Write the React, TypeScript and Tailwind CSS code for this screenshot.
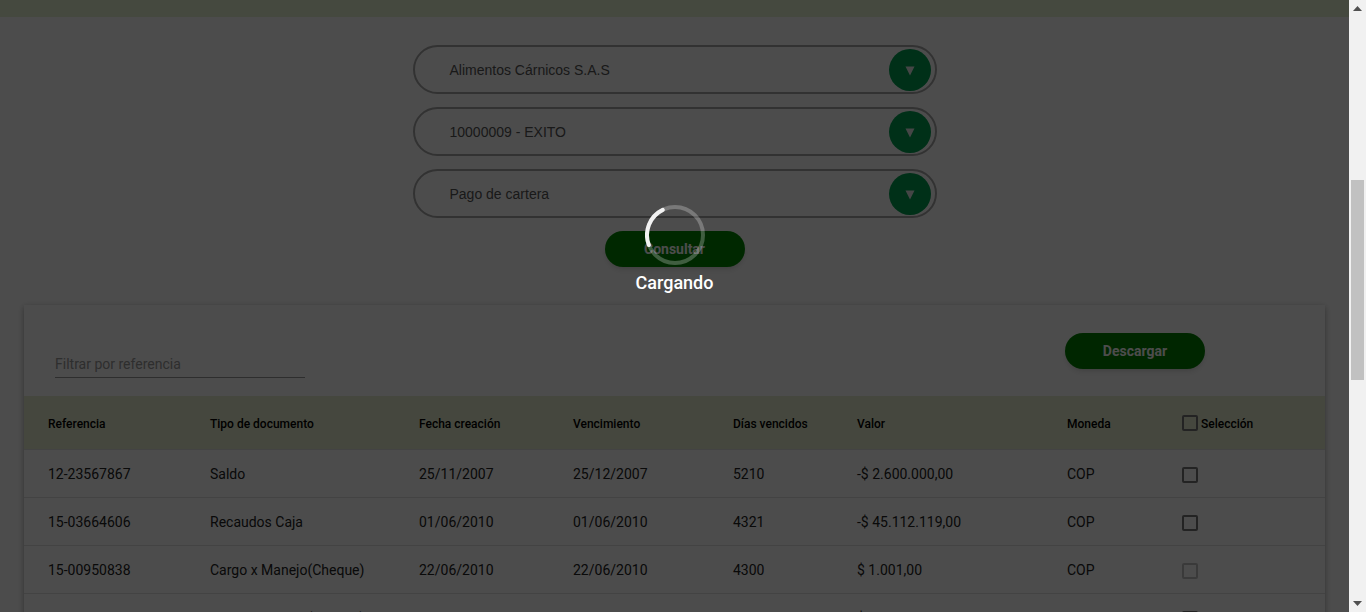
import React from "react";

const rows = [
  { ref: "12-23567867", tipo: "Saldo", fc: "25/11/2007", v: "25/12/2007", d: "5210", val: "-$ 2.600.000,00", m: "COP", dis: false },
  { ref: "15-03664606", tipo: "Recaudos Caja", fc: "01/06/2010", v: "01/06/2010", d: "4321", val: "-$ 45.112.119,00", m: "COP", dis: false },
  { ref: "15-00950838", tipo: "Cargo x Manejo(Cheque)", fc: "22/06/2010", v: "22/06/2010", d: "4300", val: "$ 1.001,00", m: "COP", dis: true },
  { ref: "15-00950839", tipo: "Cargo x Manejo(Cheque)", fc: "22/06/2010", v: "22/06/2010", d: "4300", val: "$ 1.001,00", m: "COP", dis: false },
];

const cols = "grid grid-cols-[162px_209px_154px_160px_124px_210px_115px_1fr] pl-[24px] items-center";

function Select({ label }: { label: string }) {
  return (
    <div className="w-[524px] h-[49px] rounded-full border-2 border-[#a8a8a8] flex items-center justify-between pl-[35px] pr-[4px]">
      <span className="text-[14px] text-[#555] pt-[2px]" style={{ fontFamily: '"Liberation Sans", Arial, sans-serif' }}>
        {label}
      </span>
      <div className="w-[42px] h-[42px] rounded-full bg-[#00a050] flex items-center justify-center">
        <svg width="10" height="10" viewBox="0 0 10 10" className="mt-[3px]">
          <polygon points="0.5,0.5 9.5,0.5 5,9.5" fill="#e6ecec" />
        </svg>
      </div>
    </div>
  );
}

function Check({ disabled }: { disabled?: boolean }) {
  return (
    <div
      className={
        "w-[16px] h-[16px] rounded-[2px] border-2 " +
        (disabled ? "border-[#c2c2c2]" : "border-[#757575]")
      }
    />
  );
}

export default function App() {
  return (
    <div
      className="flex h-[612px] w-[1366px] overflow-hidden bg-white"
      style={{ fontFamily: "Roboto, 'Liberation Sans', sans-serif" }}
    >
      <div className="relative flex-1 min-w-0">
        <div className="h-[17px] bg-[#e6f5d3]" />
        <div className="flex flex-col items-center pt-[28px] gap-[13px]">
          <Select label="Alimentos Cárnicos S.A.S" />
          <Select label="10000009 - EXITO" />
          <Select label="Pago de cartera" />
          <button className="w-[140px] h-[36px] rounded-full bg-[#008800] text-white text-[14px] font-bold shadow-md">
            Consultar
          </button>
        </div>

        <div className="mx-[24px] mt-[38px] bg-white shadow-[0_2px_6px_rgba(0,0,0,0.35)]">
          <div className="h-[91px] flex justify-between pl-[31px] pr-[120px] pt-[28px]">
            <div className="w-[250px] mt-[20px] h-[25px] border-b border-[#9a9a9a]">
              <div className="h-[20px] leading-[20px] pt-[1px] text-[14px] text-[#9a9a9a]">Filtrar por referencia</div>
            </div>
            <button className="w-[140px] h-[36px] rounded-full bg-[#008000] text-white text-[14px] font-bold shadow-md">
              Descargar
            </button>
          </div>
          <div className={cols + " h-[54px] pt-[2px] bg-[#e6efcf] border-b border-[#e0e0e0] text-[12px] font-medium text-black"}>
            <div>Referencia</div>
            <div>Tipo de documento</div>
            <div>Fecha creación</div>
            <div>Vencimiento</div>
            <div>Días vencidos</div>
            <div>Valor</div>
            <div>Moneda</div>
            <div className="flex items-center gap-[3px] -mt-[2px]">
              <Check />
              <span className="pt-[2px]">Selección</span>
            </div>
          </div>
          {rows.map((r, i) => (
            <div key={i} className={cols + " h-[48px] pt-[2px] border-b border-[#e0e0e0] text-[14px] text-[#222]"}>
              <div>{r.ref}</div>
              <div>{r.tipo}</div>
              <div>{r.fc}</div>
              <div>{r.v}</div>
              <div>{r.d}</div>
              <div>{r.val}</div>
              <div>{r.m}</div>
              <div className="flex items-center">
                <Check disabled={r.dis} />
              </div>
            </div>
          ))}
        </div>

        <div className="absolute inset-0 bg-black/70">
          <div className="absolute left-0 right-0 top-[205px] flex flex-col items-center">
            <svg width="60" height="60" viewBox="0 0 60 60">
              <circle cx="30" cy="30" r="28" fill="none" stroke="rgba(255,255,255,0.25)" strokeWidth="4" />
              <path d="M3.86 40.03 A28 28 0 0 1 17.73 4.83" fill="none" stroke="#f2f2f2" strokeWidth="4" strokeLinecap="round" />
            </svg>
            <div className="mt-[7px] text-[18px] font-medium text-white leading-[22px]">Cargando</div>
          </div>
        </div>
      </div>

      <div className="w-[17px] bg-[#f1f1f1] flex flex-col items-center">
        <div className="h-[17px] flex items-center justify-center">
          <svg width="9" height="5" viewBox="0 0 9 5">
            <polygon points="0,5 9,5 4.5,0" fill="#505050" />
          </svg>
        </div>
        <div className="mt-[163px] w-[13px] h-[200px] bg-[#c1c1c1]" />
        <div className="flex-1" />
        <div className="h-[17px] flex items-center justify-center">
          <svg width="9" height="5" viewBox="0 0 9 5">
            <polygon points="0,0 9,0 4.5,5" fill="#505050" />
          </svg>
        </div>
      </div>
    </div>
  );
}
